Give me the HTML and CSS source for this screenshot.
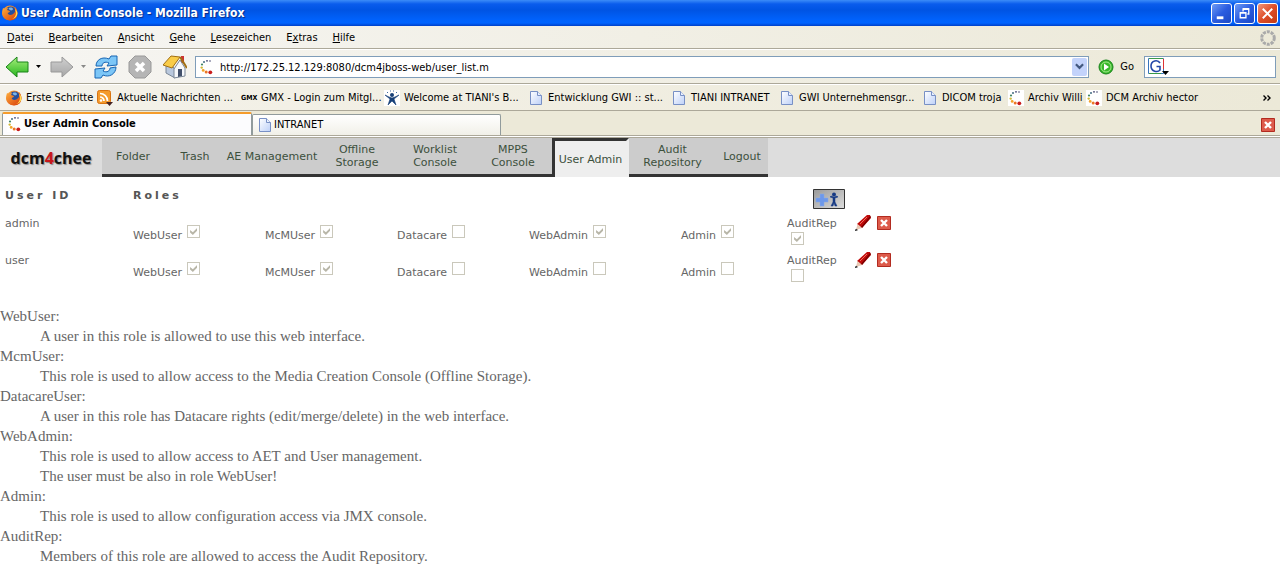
FILE: index.html
```html
<!DOCTYPE html>
<html lang="de">
<head>
<meta charset="utf-8">
<title>User Admin Console - Mozilla Firefox</title>
<link rel="stylesheet" href="styles.css">
</head>
<body>
<svg class="defs" aria-hidden="true">
  <defs>
    <linearGradient id="orange" x1="0" y1="0" x2="1" y2="1"><stop offset="0" stop-color="#ffb13d"/><stop offset="1" stop-color="#d83a08"/></linearGradient>
    <linearGradient id="green" x1="0" y1="0" x2="0" y2="1"><stop offset="0" stop-color="#a5ee7b"/><stop offset="1" stop-color="#27b51e"/></linearGradient>
    <linearGradient id="gray" x1="0" y1="0" x2="0" y2="1"><stop offset="0" stop-color="#d0d0d0"/><stop offset="1" stop-color="#a6a6a6"/></linearGradient>
    <linearGradient id="paper" x1="0" y1="0" x2="1" y2="1"><stop offset="0" stop-color="#fff"/><stop offset="1" stop-color="#bdd0f8"/></linearGradient>
    <linearGradient id="metal" x1="0" y1="0" x2="1" y2="1"><stop offset="0" stop-color="#999"/><stop offset="1" stop-color="#ddd"/></linearGradient>
    <symbol id="firefox" viewBox="0 0 16 16">
      <circle cx="8" cy="8" r="7.500" fill="url(#orange)"/>
      <circle cx="8.600" cy="6.400" r="5" fill="#274f9c"/>
      <path d="M7 3c2-1 4 0 4 1S9 6 8 5 6 4 7 3z" fill="#7db6e8"/>
      <path d="M1 3l2 1c1-1 2-1 3-1L5 5l3 1c0 2-3 1-2 3 2 2 5 1 7-2l0-5c3 3 3 8 1 11-3 3-9 3-12 0S0 6 1 3z" fill="url(#orange)"/>
      <path d="M13 4c2 4 1 8-3 10 6-1 7-7 3-10z" fill="#ffdf50"/>
    </symbol>
    <symbol id="page" viewBox="0 0 16 16">
      <path d="M2.500 1.500h7l4 4v9h-11z" fill="url(#paper)" stroke="#7890c5"/>
      <path d="M9.500 1.500v4h4" fill="#e9f0ff" stroke="#7890c5"/>
    </symbol>
    <symbol id="dots" viewBox="0 0 16 16">
      <path fill="#fff" d="M0 0h16v16H0z"/>
      <circle cx="11" cy="2" r=".8" fill="#41426f"/><circle cx="8" cy="1.800" r=".9" fill="#41426f"/><circle cx="5" cy="3" r="1" fill="#426b80"/>
      <circle cx="3" cy="5.500" r="1.100" fill="#438766"/><circle cx="2.700" cy="8.600" r="1.200" fill="#d2b936"/><circle cx="4.200" cy="11.400" r="1.400" fill="#f3a329"/>
      <circle cx="7.200" cy="13" r="1.500" fill="#ec7627"/><circle cx="11.300" cy="13.300" r="1.900" fill="#c91d1d"/>
    </symbol>
    <symbol id="redx" viewBox="0 0 14 14">
      <path d="M.5.5h13v13H.5z" fill="#dd5b4b" stroke="#b22b20"/>
      <path d="M4 4l6 6M10 4l-6 6" stroke="#fff" stroke-width="2.400"/>
    </symbol>
    <symbol id="pen" viewBox="0 0 16 16">
      <path d="M12 0h3l1 3-9 10-5-4z" fill="#c00a0a"/><path d="M12 2L5 9" stroke="#f07060"/><path d="M16 2l-9 11-1-1 9-11z" fill="#700"/>
      <path d="M2.500 9L7 13l-6 2z" fill="#e8c8b4"/><path d="M1 14l-1 2 2.500-1z" fill="#222" stroke="#222" stroke-width=".5"/>
    </symbol>
  </defs>
</svg>

<header class="titlebar">
  <svg class="i16"><use href="#firefox"/></svg>
  <h1>User Admin Console - Mozilla Firefox</h1>
  <div class="winbuttons">
    <button class="win" aria-label="Minimieren"><svg viewBox="0 0 20 20"><path d="M5 13h7v3H5z" fill="#fff"/></svg></button>
    <button class="win" aria-label="Wiederherstellen"><svg viewBox="0 0 20 20" fill="none" stroke="#fff" stroke-width="1.400"><path d="M8.500 8V5.500h6v5H13M8 5h7"/><path d="M5.500 9.500h6v5h-6zM5 9h7"/></svg></button>
    <button class="win close" aria-label="Schließen"><svg viewBox="0 0 20 20"><path d="M5 5l10 10M15 5L5 15" stroke="#fff" stroke-width="2"/></svg></button>
  </div>
</header>

<nav class="menubar">
  <button><u>D</u>atei</button><button><u>B</u>earbeiten</button><button><u>A</u>nsicht</button><button><u>G</u>ehe</button><button><u>L</u>esezeichen</button><button>E<u>x</u>tras</button><button><u>H</u>ilfe</button>
  <svg class="throbber" viewBox="0 0 16 16"><circle cx="8" cy="8" r="6.300" fill="none" stroke="#aaa" stroke-width="3" stroke-dasharray="3 .96"/></svg>
</nav>

<div class="toolbar">
  <div class="tools">
    <button aria-label="Zurück"><svg class="i24" viewBox="0 0 24 24"><path d="M1 12L12 2v5h11v10H12v5z" fill="url(#green)" stroke="#188318"/></svg></button>
    <button aria-label="Verlauf zurück"><svg class="drop" viewBox="0 0 5 3"><path d="M0 0h5L2.500 3z"/></svg></button>
    <button aria-label="Vor"><svg class="i24" viewBox="0 0 24 24"><path d="M23 12L12 2v5H1v10h11v5z" fill="url(#gray)" stroke="#999"/></svg></button>
    <button aria-label="Verlauf vor"><svg class="drop" viewBox="0 0 5 3"><path d="M0 0h5L2.500 3z" fill="#888"/></svg></button>
    <button aria-label="Neu laden"><svg class="i24" viewBox="0 0 24 24" fill="#7cc6f7" stroke="#1765b3" stroke-linejoin="round"><path d="M2 11c0-6 6-10 13-7l2-3h6v9l-10 1 2-3c-4-2-7 0-7 3z"/><path d="M22 12c0 7-7 11-13 8l-2 3H1v-9l10-1-2 3c4 2 7 0 7-3z"/></svg></button>
    <button aria-label="Stopp"><svg class="i24" viewBox="0 0 24 24"><path d="M7 1h10l6 6v10l-6 6H7l-6-6V7z" fill="#b5b5b5" stroke="#999"/><path d="M8 8l8 8M16 8l-8 8" stroke="#fff" stroke-width="3.500"/></svg></button>
    <button aria-label="Startseite"><svg class="i24" viewBox="0 0 24 24"><path d="M18 1h3v7h-3z" fill="#c33"/><path d="M3 11l4-4 5 8v8l-9-5z" fill="#b9c8dd" stroke="#7a8796"/><path d="M11 14l6-9 5 8v8l-11 2z" fill="#f6f8fb" stroke="#7a8796"/><path d="M0 10L8 1l9 1-8 11z" fill="#f9cc48" stroke="#a16f13"/><path d="M17 2l7 11" fill="none" stroke="#a16f13" stroke-width="2"/><path d="M15 14h4v7l-4 1z" fill="#42506b"/></svg></button>
  </div>
  <div class="url"><svg class="i16"><use href="#dots"/></svg><input aria-label="Adresse" value="http://172.25.12.129:8080/dcm4jboss-web/user_list.m"><button class="urldrop" aria-label="Adressliste"><svg viewBox="0 0 10 7"><path d="M1 1l4 4 4-4" fill="none" stroke="#42587f" stroke-width="2.400"/></svg></button></div>
  <button class="go"><svg class="i16" viewBox="0 0 16 16"><circle cx="8" cy="8" r="7" fill="#39b82b" stroke="#17821a"/><circle cx="8" cy="8" r="5" fill="none" stroke="#a4e88d"/><path d="M6 4.500l5 3.500-5 3.500z" fill="#fff"/></svg>Go</button>
  <div class="search"><svg class="google" viewBox="0 0 22 18"><path d="M.5.5h15v15H.5z" fill="#fff" stroke="#3975bd"/><path d="M15.500 1v10" stroke="#d33"/><path d="M1 15.500h12M1 .5h14" stroke="#3a9a4a"/><path d="M12 5C10 1.500 3 2 3 8s7 6.500 9 4V8.500H8.500" fill="none" stroke="#2447a8" stroke-width="1.600"/><path d="M14 13h7l-3.500 4z"/></svg><input aria-label="Suche"></div>
</div>

<nav class="bookmarks">
  <a href="#"><svg class="i16"><use href="#firefox"/></svg>Erste Schritte</a>
  <a href="#"><svg class="i16" viewBox="0 0 16 16"><rect x=".5" y=".5" width="13" height="13" rx="2" fill="#f49a2c" stroke="#d87310"/><path d="M3 7a4 4 0 0 1 4 4M3 3.500a7.500 7.500 0 0 1 7.500 7.500" fill="none" stroke="#fff" stroke-width="1.700"/><circle cx="4" cy="10.500" r="1.300" fill="#fff"/><path d="M9 12h7l-3.500 4z" fill="#422"/></svg><span>Aktuelle Nachrichten ...</span></a>
  <a href="#"><b class="gmx">GMX</b>GMX - Login zum Mitgl...</a>
  <a href="#"><svg class="i16" viewBox="0 0 16 16"><path fill="#fff" d="M0 0h16v16H0z"/><circle cx="8" cy="5" r="2" fill="#163f78"/><path d="M1 5l5 4-2 6 4-4 4 4-2-6 5-4-4 2-3 1-3-1z" fill="#163f78" stroke="#163f78" stroke-width=".6"/><path d="M3 2.500h1M6 1h1M9 1h1M12 2.500h1" stroke="#416da3"/></svg>Welcome at TIANI's B...</a>
  <a href="#"><svg class="i16"><use href="#page"/></svg>Entwicklung GWI :: st...</a>
  <a href="#"><svg class="i16"><use href="#page"/></svg>TIANI INTRANET</a>
  <a href="#"><svg class="i16"><use href="#page"/></svg>GWI Unternehmensgr...</a>
  <a href="#"><svg class="i16"><use href="#page"/></svg>DICOM troja</a>
  <a href="#"><svg class="i16"><use href="#dots"/></svg>Archiv Willi</a>
  <a href="#"><svg class="i16"><use href="#dots"/></svg>DCM Archiv hector</a>
  <button class="more" aria-label="Weitere Lesezeichen"><svg viewBox="0 0 8 6"><path d="M.5.5L3 3 .5 5.500M4.500.5L7 3 4.500 5.500" fill="none" stroke="#000" stroke-width="1.400"/></svg></button>
</nav>

<div class="tabs">
  <button class="tab active"><svg class="i16"><use href="#dots"/></svg>User Admin Console</button>
  <button class="tab"><svg class="i16"><use href="#page"/></svg>INTRANET</button>
  <button class="tabclose" aria-label="Tab schließen"><svg class="i14"><use href="#redx"/></svg></button>
</div>

<main>
  <nav class="appnav">
    <a class="logo" href="#">dcm<em>4</em>chee</a>
    <a href="#">Folder</a><a href="#">Trash</a><a href="#">AE Management</a><a href="#">Offline<br>Storage</a><a href="#">Worklist<br>Console</a><a href="#">MPPS<br>Console</a><a class="current" href="#">User Admin</a><a href="#">Audit<br>Repository</a><a href="#">Logout</a>
  </nav>

  <table class="users">
    <colgroup><col class="c-id"><col class="c-role"><col class="c-role"><col class="c-role"><col class="c-webadmin"><col class="c-admin"><col class="c-audit"><col class="c-act"></colgroup>
    <thead>
      <tr><th>User ID</th><th colspan="5">Roles</th><th class="addcell" colspan="2"><button class="add" aria-label="Add user"><svg viewBox="0 0 32 20"><path d="M.5.5h31v19H.5z" fill="url(#metal)" stroke="#333"/><path d="M7 5h4v4h4v4h-4v4H7v-4H3V9h4z" fill="#6d98ea" stroke="#86a9e8" stroke-width=".5"/><circle cx="21" cy="5.500" r="2" fill="#173a84"/><path d="M17 8l3 1v4l-2 4h2l1-3 1 3h2l-2-4V9l3-1-1-1-3 1-3-1z" fill="#173a84" stroke="#173a84" stroke-width=".5"/></svg></button></th></tr>
    </thead>
    <tbody>
      <tr>
        <td>admin</td>
        <td class="role"><label>WebUser <input type="checkbox" checked disabled></label></td>
        <td class="role"><label>McMUser <input type="checkbox" checked disabled></label></td>
        <td class="role"><label>Datacare <input type="checkbox" disabled></label></td>
        <td class="role"><label>WebAdmin <input type="checkbox" checked disabled></label></td>
        <td class="role"><label>Admin <input type="checkbox" checked disabled></label></td>
        <td class="audit"><label>AuditRep <input type="checkbox" checked disabled></label></td>
        <td><div class="actions"><button aria-label="Edit admin"><svg class="i16"><use href="#pen"/></svg></button><button aria-label="Delete admin"><svg class="i14"><use href="#redx"/></svg></button></div></td>
      </tr>
      <tr>
        <td>user</td>
        <td class="role"><label>WebUser <input type="checkbox" checked disabled></label></td>
        <td class="role"><label>McMUser <input type="checkbox" checked disabled></label></td>
        <td class="role"><label>Datacare <input type="checkbox" disabled></label></td>
        <td class="role"><label>WebAdmin <input type="checkbox" disabled></label></td>
        <td class="role"><label>Admin <input type="checkbox" disabled></label></td>
        <td class="audit"><label>AuditRep <input type="checkbox" disabled></label></td>
        <td><div class="actions"><button aria-label="Edit user"><svg class="i16"><use href="#pen"/></svg></button><button aria-label="Delete user"><svg class="i14"><use href="#redx"/></svg></button></div></td>
      </tr>
    </tbody>
  </table>

  <dl class="help">
    <dt>WebUser:</dt><dd>A user in this role is allowed to use this web interface.</dd>
    <dt>McmUser:</dt><dd>This role is used to allow access to the Media Creation Console (Offline Storage).</dd>
    <dt>DatacareUser:</dt><dd>A user in this role has Datacare rights (edit/merge/delete) in the web interface.</dd>
    <dt>WebAdmin:</dt><dd>This role is used to allow access to AET and User management.<br>The user must be also in role WebUser!</dd>
    <dt>Admin:</dt><dd>This role is used to allow configuration access via JMX console.</dd>
    <dt>AuditRep:</dt><dd>Members of this role are allowed to access the Audit Repository.</dd>
  </dl>
</main>
</body>
</html>
```
FILE: styles.css
```css
* { box-sizing: border-box; }
body { margin: 0; background: #fff; font: 11px/14px "DejaVu Sans Condensed", Tahoma, sans-serif; color: #000; }
button { margin: 0; padding: 0; border: 0; background: none; font: inherit; color: inherit; }
input { font: inherit; color: inherit; }
a { color: inherit; text-decoration: none; }
svg { display: block; flex: none; }
.defs { position: absolute; width: 0; height: 0; }
.i14 { width: 14px; height: 14px; }
.i16 { width: 16px; height: 16px; }
.i24 { width: 24px; height: 24px; }

.titlebar { display: flex; align-items: center; gap: 3px; height: 26px; padding: 0 2px; background: linear-gradient(#3c8cf8 0, #0a5cec 4px, #0054e3 10px, #0062fc 20px, #0064ff 23px, #0040c8 26px); }
.titlebar h1 { margin: 0; font: bold 12px/16px "DejaVu Sans Condensed", sans-serif; color: #fff; text-shadow: 1px 1px 1px #0a2a86; }
.winbuttons { display: flex; gap: 2px; margin-left: auto; }
.win { width: 21px; height: 21px; border: 1px solid #fff; border-radius: 3px; background: linear-gradient(135deg, #6f9cf5, #2a5ce0 50%, #1c48c4); }
.close { background: linear-gradient(135deg, #f0967a, #de4d28 50%, #c03a14); }

.menubar { display: flex; align-items: center; gap: 15px; height: 23px; padding: 1px 4px 0 7px; background: linear-gradient(90deg, #f6f5f2, #ece9d8); border-bottom: 1px solid #aca899; }
.throbber { width: 16px; height: 16px; margin-left: auto; }

.toolbar { display: flex; align-items: center; height: 35px; padding: 0 4px 0 5px; background: linear-gradient(90deg, #f6f5f2, #ece9d8); border-top: 1px solid #fff; border-bottom: 1px solid #aca899; }
.tools { display: grid; grid-template-columns: 31px 14px 31px 13px 34px 35px 32px; align-items: center; }
.drop { width: 5px; height: 3px; }
.url, .search { display: flex; align-items: center; height: 22px; background: #fff; border: 1px solid #7f9db9; }
.url { flex: 1; padding: 0 1px 0 3px; }
.url input, .search input { flex: 1; min-width: 0; height: 18px; border: 0; padding: 2px 5px 0; background: none; outline: 0; }
.urldrop { display: grid; place-items: center; width: 15px; height: 18px; border-radius: 2px; background: #c3d3fb; }
.urldrop svg { width: 9px; height: 7px; }
.go { display: flex; align-items: center; gap: 6px; margin: 0 10px 0 9px; }
.search { width: 132px; padding-left: 3px; }
.google { width: 22px; height: 18px; }

.bookmarks { display: grid; grid-template-columns: 91px 144px 143px 144px 143px 108px 143px 86px 78px 1fr auto; align-items: center; height: 27px; padding: 1px 9px 0 6px; background: linear-gradient(90deg, #f4f2ea, #ece9d8); border-top: 1px solid #fff; border-bottom: 1px solid #aca899; white-space: nowrap; }
.bookmarks a { display: flex; align-items: center; gap: 4px; }
.gmx { width: 16px; font: bold 7px/14px "DejaVu Sans Condensed", sans-serif; }
.more svg { width: 8px; height: 6px; }

.tabs { display: flex; align-items: flex-end; height: 27px; padding: 0 5px 2px 2px; background: #ece9d8; border-bottom: 1px solid #aca899; box-shadow: inset 0 -1px #fff, inset 0 -2px #aca899; }
.tab { display: flex; align-items: center; gap: 1px; width: 249px; height: 21px; padding: 0 4px; border: 1px solid #919b9c; border-bottom: 0; border-radius: 2px 2px 0 0; background: linear-gradient(#fff, #f1f0e8); }
.active { width: 250px; height: 23px; padding-bottom: 2px; border-top: 2px solid #f59c2c; background: #fcfcfe; font-weight: bold; }
.tabclose { margin: 0 0 3px auto; }

.appnav { display: grid; grid-template-columns: 102px 62px 62px 92px 78px 78px 78px 77px 87px 52px; height: 39px; background: #ddd; font: 11px/13px "DejaVu Sans", Verdana, sans-serif; color: #3c503c; text-align: center; }
.appnav a { display: grid; place-content: center; background: #ccc; border-bottom: 3px solid #333; white-space: nowrap; }
.appnav .logo { display: flex; align-items: center; justify-content: center; background: #ddd; border: 0; font: bold 16px/20px "Open Sans", sans-serif; color: #111; text-shadow: 1px 1px 1px #888; }
.logo em { font-style: normal; color: #c8171c; }
.appnav .current { background: #eee; border: 3px solid #333; border-right-color: #eee; border-bottom: 0; }

.users { table-layout: fixed; width: 894px; margin-top: 7px; border-collapse: collapse; font: 11px/13px "DejaVu Sans", Verdana, sans-serif; color: #666; }
.c-id { width: 128px; }
.c-role { width: 132px; }
.c-webadmin { width: 152px; }
.c-admin { width: 106px; }
.c-audit { width: 68px; }
.users th { height: 29px; padding: 5px 5px 0; text-align: left; vertical-align: top; letter-spacing: 3px; color: #555; }
.users .addcell { padding: 5px 0 0 31px; }
.add svg { width: 32px; height: 20px; }
.users td { height: 37px; padding: 4px 0 0 5px; vertical-align: top; }
.users .role { padding-top: 12px; }
.role label { display: flex; align-items: flex-start; gap: 5px; line-height: 21px; }
.audit label { display: block; line-height: 13px; }
.audit input { display: block; margin: 2px 4px; }
.users input { appearance: none; flex: none; width: 13px; height: 13px; border: 1px solid #cac8bb; background: #fff; }
.role input { margin: 0; }
.users input:checked::after { content: ""; display: block; width: 7px; height: 7px; margin: 2px; background: #b8b6a8; clip-path: polygon(0 28%, 40% 62%, 100% 0, 100% 40%, 40% 100%, 0 66%); }
.users td:last-child { padding-top: 2px; }
.actions { display: flex; align-items: center; gap: 6px; }

.help { margin: 19px 0 0; font: 15px/20px "Liberation Serif", "Times New Roman", serif; color: #666; }
.help dd { margin: 0 0 0 40px; }
```
